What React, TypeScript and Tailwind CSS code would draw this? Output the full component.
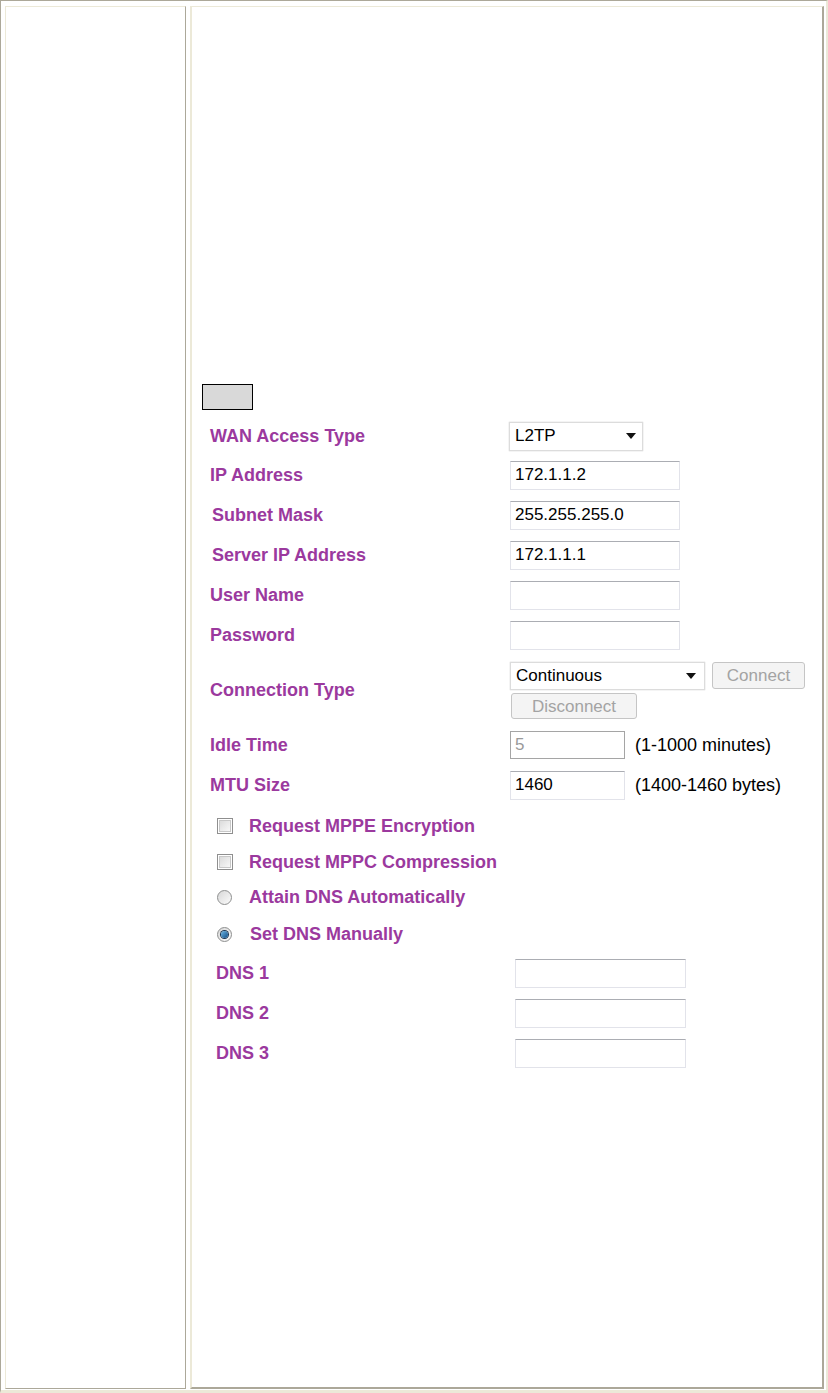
import React from "react";

const label = "font-bold text-[18px] text-[#9b399e] leading-none";
const field =
  "h-[29px] border border-[#e2e3ea] border-t-[#abadb3] bg-white px-[4px] text-[17px] text-black outline-none";

function Arrow() {
  return (
    <svg width="10" height="6" viewBox="0 0 10 6" className="shrink-0">
      <path d="M0 0h10L5 6z" fill="#111" />
    </svg>
  );
}

function CheckBox() {
  return (
    <span className="flex h-[16px] w-[16px] items-center justify-center border border-[#8f8f8f] bg-white">
      <span className="h-[12px] w-[12px] border border-[#c8c8c8] bg-gradient-to-br from-[#dcdcdc] to-[#f8f8f8]" />
    </span>
  );
}

function Radio({ on }: { on?: boolean }) {
  return (
    <span className="flex h-[15px] w-[15px] items-center justify-center rounded-full border border-[#8e8f8f] bg-gradient-to-br from-[#d8d8d8] to-[#fbfbfb]">
      {on && <span className="h-[7px] w-[7px] rounded-full bg-gradient-to-br from-[#6fb8e6] to-[#0d4f88] ring-1 ring-[#1b3550]" />}
    </span>
  );
}

function Row({ name, value, pl = "pl-[18px]" }: { name: string; value?: string; pl?: string }) {
  return (
    <div className="flex h-[40px] items-center">
      <div className={`w-[318px] ${pl} ${label}`}>{name}</div>
      <input readOnly value={value ?? ""} className={`${field} w-[170px]`} />
    </div>
  );
}

export default function App() {
  return (
    <div className="h-[1393px] w-[828px] border-t border-l border-[#aca899] border-r-2 border-r-[#ece9d8] border-b-[3px] border-b-[#ece9d8] bg-white pt-[5px] pl-[4px] pb-[1px] font-['Liberation_Sans',Arial,sans-serif]">
      <div className="flex h-[1383px] gap-[4px]">
        {/* left menu cell, empty */}
        <div className="w-[181px] border border-[#ece9d8] border-r-[#aca899] border-b-[#aca899]" />

        {/* main cell */}
        <div className="w-[634px] border-t border-l-2 border-r-2 border-b-2 border-[#ece9d8] border-r-[#aca899] border-b-[#aca899]">
          <div className="mt-[377px] ml-[10px] h-[26px] w-[51px] border border-black bg-[#d9d9d9]" />

          <div className="mt-[7px] flex h-[38px] items-center">
            <div className={`w-[317px] pl-[18px] ${label}`}>WAN Access Type</div>
            <div className="flex h-[29px] w-[134px] items-center justify-between border border-[#dcdcdc] bg-white pr-[6px] pl-[5px] text-[17px] shadow-[0_0_1px_#bbb]">
              <span>L2TP</span>
              <Arrow />
            </div>
          </div>

          <Row name="IP Address" value="172.1.1.2" />
          <Row name="Subnet Mask" value="255.255.255.0" pl="pl-[20px]" />
          <Row name="Server IP Address" value="172.1.1.1" pl="pl-[20px]" />
          <Row name="User Name" />
          <Row name="Password" />

          <div className="flex h-[70px] items-center">
            <div className={`w-[318px] pl-[18px] ${label}`}>Connection Type</div>
            <div className="flex flex-col">
              <div className="flex items-center gap-[7px]">
                <div className="flex h-[28px] w-[195px] items-center justify-between border border-[#dcdcdc] bg-white pr-[8px] pl-[5px] text-[17px] shadow-[0_0_1px_#bbb]">
                  <span>Continuous</span>
                  <Arrow />
                </div>
                <button className="h-[27px] w-[93px] rounded-[3px] border border-[#c5c5c5] bg-[#f4f4f4] text-[17px] text-[#a3a3a3]">
                  Connect
                </button>
              </div>
              <button className="mt-[3px] ml-[1px] h-[26px] w-[126px] rounded-[3px] border border-[#c5c5c5] bg-[#f4f4f4] text-[17px] text-[#a3a3a3]">
                Disconnect
              </button>
            </div>
          </div>

          <div className="flex h-[40px] items-center">
            <div className={`w-[318px] pl-[18px] ${label}`}>Idle Time</div>
            <input readOnly value="5" className="h-[28px] w-[115px] border border-[#a5a5a5] bg-white px-[4px] text-[17px] text-[#9a9a9a] outline-none" />
            <span className="ml-[10px] text-[18px] text-black">(1-1000 minutes)</span>
          </div>
          <div className="flex h-[40px] items-center">
            <div className={`w-[318px] pl-[18px] ${label}`}>MTU Size</div>
            <input readOnly value="1460" className={`${field} h-[28px] w-[115px]`} />
            <span className="ml-[10px] text-[18px] text-black">(1400-1460 bytes)</span>
          </div>

          <div className="mt-[3px] flex h-[36px] items-center gap-[16px] pl-[25px]">
            <CheckBox />
            <span className={label}>Request MPPE Encryption</span>
          </div>
          <div className="flex h-[35px] items-center gap-[16px] pl-[25px]">
            <CheckBox />
            <span className={label}>Request MPPC Compression</span>
          </div>
          <div className="flex h-[36px] items-center gap-[17px] pl-[25px]">
            <Radio />
            <span className={label}>Attain DNS Automatically</span>
          </div>
          <div className="flex h-[38px] items-center gap-[18px] pl-[25px]">
            <Radio on />
            <span className={label}>Set DNS Manually</span>
          </div>

          {["DNS 1", "DNS 2", "DNS 3"].map((d) => (
            <div key={d} className="flex h-[40px] items-center first:mt-[1px]">
              <div className={`w-[323px] pl-[24px] ${label}`}>{d}</div>
              <input readOnly value="" className={`${field} h-[29px] w-[171px]`} />
            </div>
          ))}
        </div>
      </div>
    </div>
  );
}
